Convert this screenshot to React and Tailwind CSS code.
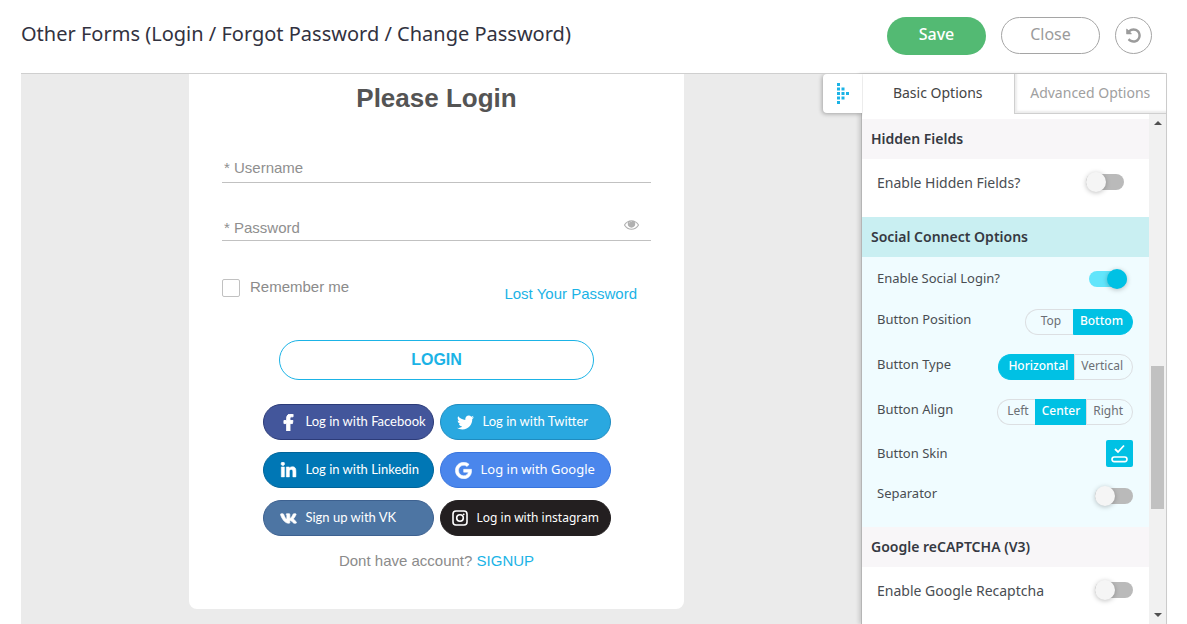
import { useState } from "react";
import { FaFacebookF, FaGoogle, FaLinkedinIn, FaTwitter, FaVk } from "react-icons/fa";

const UndoIcon = () => (
  <svg viewBox="0 0 1792 1792" className="w-[17px] h-[17px]" fill="currentColor" aria-hidden="true">
    <path d="M1664 896q0 156-61 298t-164 245-245 164-298 61q-172 0-327-72.5t-264-204.5q-7-10-6.5-22.5t8.5-20.5l137-138q10-9 25-9 16 2 23 12 73 95 179 147t225 52q104 0 198.5-40.5t163.5-109.5 109.5-163.5 40.5-198.5-40.5-198.5-109.5-163.5-163.5-109.5-198.5-40.5q-98 0-188 35.5t-160 101.5l137 138q31 30 14 69-17 40-59 40h-448q-26 0-45-19t-19-45v-448q0-42 40-59 39-17 69 14l130 129q107-101 244.5-156.5t284.5-55.5q156 0 298 61t245 164 164 245 61 298z" />
  </svg>
);

const EyeIcon = () => (
  <svg viewBox="0 0 1792 1792" className="w-[15px] h-[15px]" fill="currentColor" aria-hidden="true">
    <path d="M1664 960q-152-236-381-353 61 104 61 225 0 185-131.5 316.5t-316.5 131.5-316.5-131.5-131.5-316.5q0-121 61-225-229 117-381 353 133 205 333.5 326.5t434.5 121.5 434.5-121.5 333.5-326.5zm-720-384q0-20-14-34t-34-14q-125 0-214.5 89.5t-89.5 214.5q0 20 14 34t34 14 34-14 14-34q0-86 61-147t147-61q20 0 34-14t14-34zm848 384q0 34-20 69-140 230-376.5 368.5t-499.5 138.5-499.5-139-376.5-368q-20-35-20-69t20-69q140-229 376.5-368t499.5-139 499.5 139 376.5 368q20 35 20 69z" />
    <circle cx="896" cy="860" r="300" />
  </svg>
);

const InstagramIcon = () => (
  <svg viewBox="0 0 18 18" className="w-[18px] h-[18px]" fill="none" stroke="currentColor" aria-hidden="true">
    <rect x="2" y="2" width="14" height="14" rx="3" strokeWidth="1.6" />
    <circle cx="9" cy="9" r="3.3" strokeWidth="1.6" />
    <circle cx="12.7" cy="5.3" r="0.9" fill="currentColor" stroke="none" />
  </svg>
);

// triangle made of dots, pointing to the right
const DotsIcon = () => (
  <svg viewBox="0 0 12 21" className="w-3 h-[21px]" fill="#1bb3e6" aria-hidden="true">
    {[1, 2, 3, 2, 1].map((count, row) =>
      Array.from({ length: count }, (_, col) => (
        <rect key={`${row}-${col}`} x={col * 4.5} y={row * 4.5} width="3" height="3" />
      ))
    )}
  </svg>
);

const SkinIcon = () => (
  <svg viewBox="0 0 27 27" className="w-[27px] h-[27px]" fill="none" stroke="white" aria-hidden="true">
    <path d="M9 9l3 3 6-6.5" strokeWidth="1.8" />
    <rect x="6" y="17" width="15" height="4.6" rx="2.3" strokeWidth="1.6" />
  </svg>
);

const socials = [
  {
    text: "Log in with Facebook",
    icon: <FaFacebookF stroke="currentColor" strokeWidth="28" />,
    style: "pl-4 bg-[#43569b] border-[#2c3b78] text-[13px] font-['Lato',sans-serif]",
  },
  {
    text: "Log in with Twitter",
    icon: <FaTwitter />,
    style: "pl-4 bg-[#29a8e0] border-[#1f8cc0] text-[13px] font-['Lato',sans-serif]",
  },
  {
    text: "Log in with Linkedin",
    icon: <FaLinkedinIn stroke="currentColor" strokeWidth="16" />,
    style: "pl-4 bg-[#0077b5] border-[#006499] text-[13px] font-['Lato',sans-serif]",
  },
  {
    text: "Log in with Google",
    icon: <FaGoogle stroke="currentColor" strokeWidth="16" />,
    style: "pl-[14px] bg-[#4a86ec] border-[#3874dd] text-[13px] font-['Noto_Sans',sans-serif]",
  },
  {
    text: "Sign up with VK",
    icon: <FaVk stroke="currentColor" strokeWidth="24" />,
    style: "pl-4 bg-[#4d75a3] border-[#3d6190] text-[13px] font-['Lato',sans-serif]",
  },
  {
    text: "Log in with instagram",
    icon: <InstagramIcon />,
    style: "pl-[10px] bg-[#231f20] border-[#231f20] text-[12px] font-['Noto_Sans',sans-serif]",
  },
];

function Toggle({ id, defaultChecked }) {
  return (
    <input
      id={id}
      type="checkbox"
      role="switch"
      defaultChecked={defaultChecked}
      className="appearance-none relative w-[38px] h-4 rounded-full bg-[#bababa] checked:bg-[#62e5fb] cursor-pointer before:absolute before:-top-[2px] before:left-0 before:w-5 before:h-5 before:rounded-full before:bg-[#f5f5f5] before:shadow-[0_1px_5px_rgba(0,0,0,0.25)] checked:before:left-[18px] checked:before:bg-[#00c1e4]"
    />
  );
}

function Segmented({ name, options, initial }) {
  const [value, setValue] = useState(initial);
  return (
    <div className="flex h-[26px]" role="radiogroup" aria-label={name}>
      {options.map((option) => (
        <label
          key={option}
          className={`flex items-center justify-center px-[6px] pb-[2px] first:pl-[9px] last:pr-[9px] border-y border-l last:border-r border-[#dcdfe2] first:rounded-l-full last:rounded-r-full text-[12px] text-[#6b6f75] cursor-pointer has-checked:bg-[#00c1e4] has-checked:border-[#00c1e4] has-checked:text-white has-checked:font-medium ${
            options.length === 2 ? "min-w-12" : ""
          }`}
        >
          <input
            type="radio"
            name={name}
            className="appearance-none absolute"
            checked={value === option}
            onChange={() => setValue(option)}
          />
          {option}
        </label>
      ))}
    </div>
  );
}

function SectionTitle({ children, active }) {
  return (
    <h2
      className={`flex items-center h-10 px-[9px] pb-[2px] text-[14px] font-semibold text-[#353942] ${
        active ? "bg-[#c9eff2]" : "bg-[#f8f6f8]"
      }`}
    >
      {children}
    </h2>
  );
}

export default function App() {
  return (
    <div className="h-screen flex flex-col overflow-hidden bg-white pl-[21px] pr-5 font-['Noto_Sans',sans-serif]">
      <header className="flex items-center justify-between h-[73px] shrink-0 pr-[15px]">
        <h1 className="text-[20px] pb-[6px] text-[#32323f]">
          Other Forms (Login / Forgot Password / Change Password)
        </h1>
        <div className="flex items-center gap-[15px] pb-[2px]">
          <button className="w-[99px] h-[38px] pb-1 rounded-full bg-[#53ba73] text-white text-[16px] font-medium">
            Save
          </button>
          <button className="w-[99px] h-[37px] pb-1 rounded-full border border-[#a5a5a5] text-[#9b9b9b] text-[16px]">
            Close
          </button>
          <button
            aria-label="Reset"
            className="flex items-center justify-center w-[37px] h-[37px] rounded-full border border-[#a5a5a5] text-[#9b9b9b]"
          >
            <UndoIcon />
          </button>
        </div>
      </header>

      <main className="flex flex-1 min-h-0 border-t border-r border-[#cfcfcf]">
        <section className="flex-1 bg-[#ebebeb] pr-[9px] font-['Liberation_Sans',sans-serif]">
          <form className="w-full max-w-[495px] mx-auto px-[33px] pt-[7px] pb-9 rounded-b-lg bg-white text-[15px] text-[#8b8b8b]">
            <h2 className="text-center text-[26px] leading-[34px] font-bold text-[#545454]">Please Login</h2>
            <input
              aria-label="Username"
              placeholder="* Username"
              className="block w-full h-7 mt-10 px-[2px] pb-[2px] border-b border-[#c1c1c1] outline-none placeholder:text-[#8f8f8f]"
            />
            <div className="flex items-start mt-[30px] pt-1 pl-[2px] pr-[12px] h-7 border-b border-[#c1c1c1] text-[#b0b0b0]">
              <input
                type="password"
                aria-label="Password"
                placeholder="* Password"
                className="flex-1 outline-none placeholder:text-[#8f8f8f]"
              />
              <EyeIcon />
            </div>
            <div className="flex justify-between pr-[14px] mt-[35px] h-[33px]">
              <label className="flex items-center gap-[10px] h-6">
                <input
                  type="checkbox"
                  className="appearance-none w-[18px] h-[18px] border border-[#c1c1c1] rounded-xs"
                />
                <span className="pb-[2px]">Remember me</span>
              </label>
              <a href="#" className="self-end pb-1 text-[#1bb3e6]">
                Lost Your Password
              </a>
            </div>
            <button
              type="button"
              className="block w-full max-w-[315px] h-10 mt-[31px] mx-auto rounded-full border border-[#1bb3e6] text-[#1bb3e6] text-[16px] font-bold"
            >
              LOGIN
            </button>
            <div className="flex flex-wrap justify-center gap-x-[6px] gap-y-3 mt-6">
              {socials.map((item) => (
                <button
                  type="button"
                  key={item.text}
                  className={`flex items-center gap-2 w-[171px] h-9 rounded-full border text-white ${item.style}`}
                >
                  <span className="flex justify-center w-[18px] text-[17px]">{item.icon}</span>
                  {item.text}
                </button>
              ))}
            </div>
            <p className="mt-[14px] text-center">
              Dont have account?{" "}
              <a href="#" className="text-[#1bb3e6]">
                SIGNUP
              </a>
            </p>
          </form>
        </section>

        <aside className="relative flex flex-col w-[305px] shrink-0 bg-white border-l border-[#b5b5b5] shadow-[-2px_0_4px_rgba(0,0,0,0.15)]">
          <button
            aria-label="Collapse options"
            className="absolute top-0 -left-[39px] flex items-center justify-center w-[39px] h-[39px] rounded-l-sm bg-white shadow-[-1px_1px_4px_rgba(0,0,0,0.3)] [clip-path:inset(0_-1px_-6px_-6px)]"
          >
            <DotsIcon />
          </button>
          <nav className="flex h-10 shrink-0 text-[14px]">
            <button className="flex-1 pb-[3px] text-[#444]">Basic Options</button>
            <button className="flex-1 pb-[2px] border-l border-b border-[#cfcfcf] text-[#a0a0a0] shadow-[inset_2px_-2px_2px_rgba(0,0,0,0.08)]">
              Advanced Options
            </button>
          </nav>
          <div className="flex flex-1 min-h-0">
            <div className="flex-1 pt-[5px] overflow-hidden text-[13px] text-[#494d52]">
              <SectionTitle>Hidden Fields</SectionTitle>
              <div className="flex items-center justify-between h-[58px] pl-[15px] pr-[25px] pb-3 text-[14px]">
                <label htmlFor="hidden">Enable Hidden Fields?</label>
                <Toggle id="hidden" />
              </div>

              <SectionTitle active>Social Connect Options</SectionTitle>
              <div className="pt-[2px] pb-[9px] pl-[15px] pr-4 bg-[#f0fcff]">
                <div className="flex items-center justify-between h-10 pr-[6px]">
                  <label htmlFor="social">Enable Social Login?</label>
                  <Toggle id="social" defaultChecked />
                </div>
                <div className="flex items-center justify-between h-[45px]">
                  <span className="pb-1">Button Position</span>
                  <Segmented name="Button Position" options={["Top", "Bottom"]} initial="Bottom" />
                </div>
                <div className="flex items-center justify-between h-[45px]">
                  <span className="pb-1">Button Type</span>
                  <Segmented name="Button Type" options={["Horizontal", "Vertical"]} initial="Horizontal" />
                </div>
                <div className="flex items-center justify-between h-[45px]">
                  <span className="pb-1">Button Align</span>
                  <Segmented name="Button Align" options={["Left", "Center", "Right"]} initial="Center" />
                </div>
                <div className="flex items-center justify-between h-[39px]">
                  <span>Button Skin</span>
                  <button aria-label="Choose skin" className="rounded-xs bg-[#00c1e4]">
                    <SkinIcon />
                  </button>
                </div>
                <div className="flex items-center justify-between h-[45px]">
                  <label htmlFor="separator" className="pb-1">
                    Separator
                  </label>
                  <Toggle id="separator" />
                </div>
              </div>

              <SectionTitle>Google reCAPTCHA (V3)</SectionTitle>
              <div className="flex items-center justify-between h-[46px] pl-[15px] pr-4 text-[14px]">
                <label htmlFor="recaptcha">Enable Google Recaptcha</label>
                <Toggle id="recaptcha" />
              </div>
            </div>

            <div className="flex flex-col items-center w-[17px] py-[7px] bg-[#f1f1f1]">
              <span className="border-x-4 border-b-4 border-x-transparent border-b-[#505050]" />
              <span className="w-[13px] h-[143px] mt-[241px] mb-auto bg-[#c1c1c1]" />
              <span className="border-x-4 border-t-4 border-x-transparent border-t-[#505050]" />
            </div>
          </div>
        </aside>
      </main>
    </div>
  );
}
